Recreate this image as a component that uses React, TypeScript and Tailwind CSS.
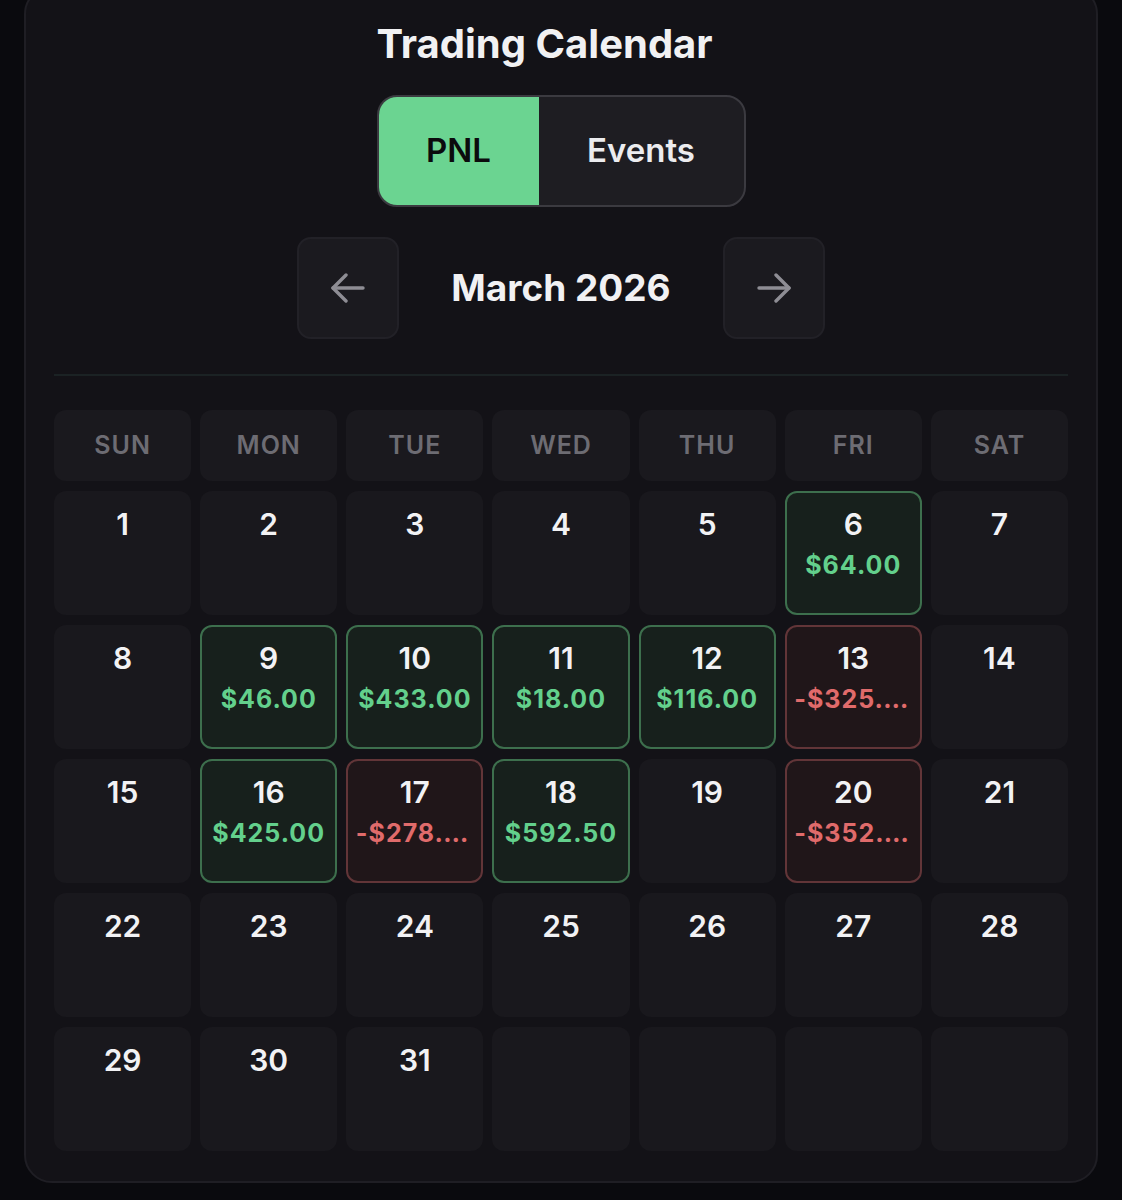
const WEEKDAYS = ['SUN', 'MON', 'TUE', 'WED', 'THU', 'FRI', 'SAT'];

// pnl for March 2026, keyed by day
const PNL: Record<number, number> = {
  6: 64,
  9: 46,
  10: 433,
  11: 18,
  12: 116,
  13: -325,
  16: 425,
  17: -278,
  18: 592.5,
  20: -352,
};

function fmt(v: number) {
  const s = `$${Math.abs(v).toFixed(2)}`;
  return v < 0 ? `-${s}` : s;
}

function Arrow({ dir }: { dir: 'left' | 'right' }) {
  return (
    <svg width="36" height="30" viewBox="0 0 36 30" fill="none" stroke="#8e8d94" strokeWidth="3.4" strokeLinecap="round" strokeLinejoin="round"
      className={dir === 'right' ? 'rotate-180' : ''}>
      <path d="M33 15H3" />
      <path d="M16 2L3 15l13 13" />
    </svg>
  );
}

function DayCell({ day }: { day: number | null }) {
  if (day === null) {
    return <div className="h-[124px] rounded-[12px] bg-[#19181d]" />;
  }
  const v = PNL[day];
  const tone =
    v === undefined
      ? 'bg-[#19181d] border-transparent'
      : v >= 0
        ? 'bg-[#17201c] border-[#3d6f4d]'
        : 'bg-[#201619] border-[#623538]';

  return (
    <div className={`h-[124px] rounded-[12px] border-2 ${tone} flex flex-col items-center pt-[14px] min-w-0`}>
      <span className="text-[30px] leading-[34px] font-semibold text-[#f2f2f4]">{day}</span>
      {v !== undefined && (
        <span
          className={`mt-[9px] w-[118px] text-center truncate text-[25px] leading-[30px] font-bold tracking-[0.04em] ${
            v >= 0 ? 'text-[#63d08c]' : 'text-[#e06b6b]'
          }`}
        >
          {fmt(v)}
        </span>
      )}
    </div>
  );
}

export default function App() {
  // march 2026 starts on a sunday, 31 days
  const cells: (number | null)[] = [];
  for (let d = 1; d <= 31; d++) cells.push(d);
  while (cells.length < 35) cells.push(null);

  return (
    <div className="min-h-[1200px] bg-[#0a0a0e] px-[24px] overflow-hidden" style={{ fontFamily: 'Inter, "Noto Sans", sans-serif' }}>
      <div className="-mt-[14px] w-[1074px] rounded-[28px] border-2 border-[#1f1e24] bg-[#131217] pt-[32px] pb-[30px] px-[28px] flex flex-col items-center">
        <h1 className="mr-[33px] text-[40px] leading-[48px] font-bold text-[#f1f1f3]">Trading Calendar</h1>

        <div className="mt-[27px] flex h-[112px] w-[369px] overflow-hidden rounded-[20px] border-2 border-[#3b3a40] bg-[#1e1d22]">
          <button className="w-[160px] bg-[#6bd491] text-[33px] font-semibold text-[#0b0b0d]">PNL</button>
          <button className="flex-1 text-[33px] font-semibold text-[#ececef]">Events</button>
        </div>

        <div className="mt-[30px] flex items-center gap-[52px]">
          <button className="flex h-[102px] w-[102px] items-center justify-center rounded-[14px] border-2 border-[#222127] bg-[#1b1a1f]">
            <Arrow dir="left" />
          </button>
          <span className="w-[220px] text-center text-[37px] font-bold text-[#f1f1f3]">March 2026</span>
          <button className="flex h-[102px] w-[102px] items-center justify-center rounded-[14px] border-2 border-[#222127] bg-[#1b1a1f]">
            <Arrow dir="right" />
          </button>
        </div>

        <div className="mt-[35px] h-[2px] w-full bg-[#1b2224]" />

        <div className="mt-[34px] grid w-full grid-cols-7 gap-x-[9px] gap-y-[10px]">
          {WEEKDAYS.map(w => (
            <div key={w} className="flex h-[71px] items-center justify-center rounded-[12px] bg-[#1a191e] text-[25px] font-semibold tracking-[0.04em] text-[#6d6c73]">
              {w}
            </div>
          ))}
          {cells.map((d, i) => (
            <DayCell key={i} day={d} />
          ))}
        </div>
      </div>
    </div>
  );
}
